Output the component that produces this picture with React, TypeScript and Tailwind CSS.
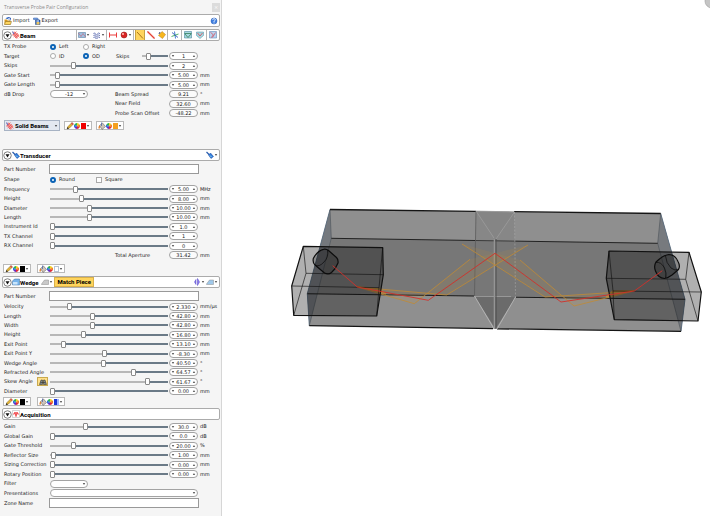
import { useState } from "react";
import type { ReactNode } from "react";

/* -------------------- Types -------------------- */

interface Param {
  label: string;
  pos: number;
  value: string;
  unit?: string;
}

/* -------------------- Data -------------------- */

const transducerParams: Param[] = [
  { label: "Frequency", pos: 20, value: "5.00", unit: "MHz" },
  { label: "Height", pos: 26, value: "8.00", unit: "mm" },
  { label: "Diameter", pos: 33, value: "10.00", unit: "mm" },
  { label: "Length", pos: 33, value: "10.00", unit: "mm" },
  { label: "Instrument Id", pos: 0, value: "1.0" },
  { label: "TX Channel", pos: 0, value: "1" },
  { label: "RX Channel", pos: 0, value: "0" }
];

const wedgeParams: Param[] = [
  { label: "Velocity", pos: 15, value: "2.330", unit: "mm/µs" },
  { label: "Length", pos: 35, value: "42.80", unit: "mm" },
  { label: "Width", pos: 35, value: "42.80", unit: "mm" },
  { label: "Height", pos: 27, value: "16.80", unit: "mm" },
  { label: "Exit Point", pos: 10, value: "13.10", unit: "mm" },
  { label: "Exit Point Y", pos: 46, value: "-8.30", unit: "mm" },
  { label: "Wedge Angle", pos: 45, value: "40.50", unit: "°" },
  { label: "Refracted Angle", pos: 72, value: "64.57", unit: "°" },
  { label: "Skew Angle", pos: 84, value: "61.67", unit: "°" },
  { label: "Diameter", pos: 0, value: "0.00", unit: "mm" }
];

const acquisitionParams: Param[] = [
  { label: "Gain", pos: 29, value: "30.0", unit: "dB" },
  { label: "Global Gain", pos: 0, value: "0.0", unit: "dB" },
  { label: "Gate Threshold", pos: 19, value: "20.00", unit: "%" },
  { label: "Reflector Size", pos: 1, value: "1.00", unit: "mm" },
  { label: "Sizing Correction", pos: 0, value: "0.00", unit: "mm" },
  { label: "Rotary Position", pos: 0, value: "0.00", unit: "mm" }
];

/* -------------------- Icons -------------------- */

const Caret = () => (
  <svg viewBox="0 0 4 4" className="h-1 w-1 shrink-0" aria-hidden="true">
    <path d="M.8 1.300h2.400L2 2.800z" fill="#222" />
  </svg>
);

function Icon({ children }: { children: ReactNode }) {
  return (
    <svg viewBox="0 0 16 16" className="h-2 w-2 shrink-0" fill="none" aria-hidden="true">
      {children}
    </svg>
  );
}

const FolderIcon = () => (
  <Icon>
    <path d="M3 3l4-3 3 5" fill="#3d6fc4" />
    <path d="M1 5h5l1 2h6v8H1z" fill="#d99a1c" />
    <path d="M3 9h12l-2 6H1z" fill="#ffd55e" stroke="#7d6320" />
    <path d="M8 1l5 1-1 5" stroke="#2c5cb8" strokeWidth="2" />
  </Icon>
);

const ExportIcon = () => (
  <Icon>
    <path d="M1 2h8l2 3H1z" fill="#79a6e8" stroke="#2856a4" />
    <path d="M5 6h9v9H5z" fill="#2e66c0" stroke="#163e85" />
    <path d="M7 10h6v5H7z" fill="#f0c65c" />
    <path d="M7 7h5v2H7z" fill="#fff" />
  </Icon>
);

const HelpIcon = () => (
  <Icon>
    <circle cx="8" cy="8" r="6" fill="#3f7fe0" stroke="#2058b8" />
    <path d="M5.500 6c0-4 6-3 5 0-1 2-2.500 1.500-2.500 4M8 11v2" stroke="#fff" strokeWidth="1.800" />
  </Icon>
);

const BeamIcon = () => (
  <Icon>
    <path d="M1 5l5-4 9 8-6 6z" fill="#f7a6a0" />
    <path d="M1 2l11 13M4 1l11 12M1 6l8 9M1 9l8-8M3 12l9-8M6 14l8-7" stroke="#e5484b" strokeWidth="1.200" />
    <path d="M1 1l3 5" stroke="#4a6ed0" strokeWidth="2" />
  </Icon>
);

const ProbeIcon = () => (
  <Icon>
    <path d="M1 2l6 6" stroke="#2c5fae" strokeWidth="2.500" />
    <path d="M5 8l4-4 6 7-5 4z" fill="#2f79dc" stroke="#1b499b" />
    <path d="M8 9l3 3" stroke="#8fe0ee" strokeWidth="2" />
  </Icon>
);

const WedgeIcon = () => (
  <Icon>
    <path d="M1 6l4-4h10v12H1z" fill="#77b4ec" stroke="#386b9f" />
    <path d="M2 8h9v5H2z" fill="#c9e5fc" />
  </Icon>
);

const PieceIcon = ({ color }: { color: string }) => (
  <Icon>
    <path d="M1 12l6-8h8v9H1z" fill={color} stroke="#8c8c8c" />
  </Icon>
);

const PulseIcon = () => (
  <Icon>
    <path d="M1 1h14v14H1z" fill="#fff" stroke="#aaa" />
    <path d="M2 8h3l1-4 2 9 2-9 1 4h3" stroke="#f0393c" strokeWidth="1.800" />
  </Icon>
);

const PencilIcon = () => (
  <Icon>
    <path d="M2 14l2-5 8-8 3 3-8 8z" fill="#e6b62f" stroke="#7a6230" />
    <path d="M11 2l3 3" stroke="#d64a56" strokeWidth="3" />
    <path d="M2 14l4-1-3-3z" fill="#222" />
  </Icon>
);

const BucketIcon = () => (
  <Icon>
    <path d="M3 7l6-5 6 7-7 6z" fill="#cfc4b8" stroke="#4e4e57" />
    <path d="M3 7c-2 2-3 4-1 7 2-1 2-4 2-6z" fill="#e17e28" />
    <path d="M7 8V1" stroke="#4a62a8" strokeWidth="1.500" />
  </Icon>
);

const WheelIcon = () => (
  <svg viewBox="0 0 16 16" className="h-[6px] w-[6px] shrink-0" aria-hidden="true">
    <path d="M8 8V0a8 8 0 0 1 7 4z" fill="#f2cf22" />
    <path d="M8 8l7-4a8 8 0 0 1 0 8z" fill="#f07b22" />
    <path d="M8 8l7 4a8 8 0 0 1-7 4z" fill="#dd2837" />
    <path d="M8 8v8a8 8 0 0 1-7-4z" fill="#6a2bc0" />
    <path d="M8 8l-7 4a8 8 0 0 1 0-8z" fill="#246fe0" />
    <path d="M8 8L1 4a8 8 0 0 1 7-4z" fill="#29b24c" />
  </svg>
);

/* -------------------- Controls -------------------- */

function Slider({ name, pos }: { name: string; pos: number }) {
  const [current, setCurrent] = useState(pos);

  return (
    <input
      type="range"
      aria-label={name}
      value={current}
      onChange={e => setCurrent(Number(e.target.value))}
      style={{
        backgroundImage: `linear-gradient(to right, #b8b8b8 ${current}%, #6b7a87 ${current}%)`
      }}
      className="h-[2px] w-full min-w-0 appearance-none [&::-webkit-slider-thumb]:h-[7px] [&::-webkit-slider-thumb]:w-[5px] [&::-webkit-slider-thumb]:appearance-none [&::-webkit-slider-thumb]:rounded-[1px] [&::-webkit-slider-thumb]:border [&::-webkit-slider-thumb]:border-[#8a8a8a] [&::-webkit-slider-thumb]:bg-white"
    />
  );
}

function Spin({ id, value }: { id: string; value: string }) {
  return (
    <div className="flex h-[8px] w-[29px] shrink-0 items-center rounded-full border border-[#a3a3a3] bg-white px-px">
      <button aria-label="Decrease" className="flex"><Caret /></button>
      <input id={id} defaultValue={value} className="h-[6px] w-full min-w-0 bg-transparent text-center leading-[6px]" />
      <button aria-label="Increase" className="flex rotate-180"><Caret /></button>
    </div>
  );
}

function Row({ label, htmlFor, children }: { label: string; htmlFor?: string; children: ReactNode }) {
  return (
    <div className="grid grid-cols-[46px_1fr] items-center pl-1 whitespace-nowrap">
      <label htmlFor={htmlFor}>{label}</label>
      <div className="flex min-w-0 items-center">{children}</div>
    </div>
  );
}

function ParamRow({ group, param }: { group: string; param: Param }) {
  const id = `${group}-${param.label}`;

  return (
    <Row label={param.label} htmlFor={id}>
      <div className="relative mr-px flex w-[118px] items-center">
        {param.label === "Skew Angle" && (
          <button
            aria-label="Flip skew"
            className="absolute right-full mr-[2px] flex h-[9px] w-[11px] items-center justify-center border border-[#c9a94e] bg-[#ffe08a]"
          >
            <Icon>
              <path d="M1 13l3-9h3v9zM15 13l-3-9H9v9z" fill="#7d8790" stroke="#222" />
              <path d="M3 9h10" stroke="#222" />
            </Icon>
          </button>
        )}
        <Slider name={`${param.label} slider`} pos={param.pos} />
      </div>
      <Spin id={id} value={param.value} />
      <span className="ml-[2px]">{param.unit}</span>
    </Row>
  );
}

function ReadOut({ label, value, unit }: { label: string; value: string; unit: string }) {
  return (
    <div className="ml-auto flex w-[105px] shrink-0 items-center">
      <label htmlFor={label} className="w-[54px]">{label}</label>
      <input
        id={label}
        readOnly
        value={value}
        className="h-[8px] w-[29px] rounded-full border border-[#a3a3a3] bg-[#fbfbfb] text-center leading-[6px]"
      />
      <span className="ml-[2px]">{unit}</span>
    </div>
  );
}

function Radio({ name, label, checked }: { name: string; label: string; checked?: boolean }) {
  return (
    <label className="flex w-[33px] items-center gap-[3px]">
      <input
        type="radio"
        name={name}
        defaultChecked={checked}
        className="h-[6px] w-[6px] appearance-none rounded-full border border-[#aaa] bg-white checked:border-2 checked:border-[#0b63b6]"
      />
      {label}
    </label>
  );
}

function Select({ id, option, wide }: { id: string; option: string; wide?: boolean }) {
  return (
    <div className={wide ? "relative w-[148px]" : "relative w-[38px]"}>
      <select
        id={id}
        className="block h-[8px] w-full appearance-none rounded-full border border-[#a3a3a3] bg-white text-center leading-[6px]"
      >
        <option>{option}</option>
      </select>
      <span className="pointer-events-none absolute top-[2px] right-[2px]"><Caret /></span>
    </div>
  );
}

function TextRow({ label, id }: { label: string; id: string }) {
  return (
    <Row label={label} htmlFor={id}>
      <input id={id} className="-ml-px h-[10px] w-[150px] border border-[#999] bg-white px-px" />
    </Row>
  );
}

function ColorButton({ kind, swatch }: { kind: "line" | "fill"; swatch: string }) {
  return (
    <button
      aria-label={`${kind} color`}
      className="flex h-[9px] w-[28px] items-center justify-between border border-[#b9b9b9] bg-white px-px"
    >
      {kind === "line" ? <PencilIcon /> : <BucketIcon />}
      <WheelIcon />
      <span className={`ml-px h-[6px] w-[6px] ${swatch}`} />
      <Caret />
    </button>
  );
}

function Header({ icon, title, children }: { icon: ReactNode; title: string; children?: ReactNode }) {
  return (
    <div className="ml-[2px] flex h-[12px] items-center rounded-[2px] border border-[#ababab] bg-white">
      <button aria-label={`Collapse ${title}`} className="flex">
        <svg viewBox="0 0 18 18" className="h-[9px] w-[9px]" aria-hidden="true">
          <circle cx="9" cy="9" r="7.500" fill="#fff" stroke="#555" strokeWidth="1.500" />
          <path d="M5 6.500h8L9 13z" fill="#111" />
        </svg>
      </button>
      {icon}
      <h2 className="font-['Roboto'] text-[6px] font-bold text-black">{title}</h2>
      {children}
    </div>
  );
}

function ToolGroup({ width, children }: { width: string; children: ReactNode }) {
  return (
    <div className={`flex h-full items-center justify-around border-l border-[#b5b5b5] ${width}`}>
      {children}
    </div>
  );
}

function Tool({ name, active, drop, children }: { name: string; active?: boolean; drop?: boolean; children: ReactNode }) {
  return (
    <button
      aria-label={name}
      className={active ? "flex h-full items-center border-x border-[#c9a243] bg-[#ffd45c]" : "flex items-center"}
    >
      <Icon>{children}</Icon>
      {drop && <Caret />}
    </button>
  );
}

/* -------------------- 3D view -------------------- */

function Scene() {
  return (
    <svg viewBox="222 0 488 516" className="h-screen w-full" role="img" aria-label="Probe pair view" fill="none" strokeLinejoin="round">
      <circle cx="712" cy="1" r="7" fill="#c5c5c5" stroke="#a5a5a5" strokeWidth=".7" />

      {/* plate */}
      <path d="M330 209.500L660.700 213.500L685 299.300L681 331.300L309.300 325.700L307.300 293.700z" fill="#8f8f8f" />
      <path d="M331.300 238.300L657.700 243.300L685 299.300L307.300 293.700z" fill="#777" />
      <path d="M330 209.500L331.300 238.300L309.300 325.700L307.300 293.700z" fill="#74787d" />
      <path d="M660.700 213.500L657.700 243.300L681 331.300L685 299.300z" fill="#777a7e" />
      <path d="M330 209.500L307.300 293.700L309.300 325.700M660.700 213.500L685 299.300L681 331.300" stroke="#5a6c7e" strokeWidth=".9" />
      <path d="M330 209.500L331.300 238.300L309.300 325.700M660.700 213.500L657.700 243.300L681 331.300" stroke="#4c5359" strokeWidth=".6" />
      <path d="M330 209.500L476 211.300M514 211.700L660.700 213.500M309.300 325.700L493 328.700M497 328.800L681 331.300" stroke="#151515" strokeWidth="1.300" />
      <path d="M307.300 293.700L474 296M516 297.300L685 299.300" stroke="#1c1c1c" strokeWidth="1.100" />
      <path d="M331.300 238.300L657.700 243.300" stroke="#222" />

      {/* weld */}
      <path d="M476 211L514.500 211.700L515.500 297L495 329L474.500 296z" fill="#777" fillOpacity=".3" />
      <path d="M476 211L514.500 211.700L495.500 240z" fill="#858585" />
      <path d="M474.500 296L515.500 297L495.500 329z" fill="#6b6b6b" />
      <path d="M476 211L474.500 296" stroke="#5c5c5c" strokeWidth=".8" />
      <path d="M514.500 212L515.500 297" stroke="#a8a8a8" strokeDasharray="2 1.500" strokeWidth=".6" />
      <path d="M476 211L494 238M514.500 212L496 239M476 211L514.500 212" stroke="#a0a0a0" strokeWidth=".7" />
      <path d="M474.500 296L493.500 328M515.500 297L497 329" stroke="#bdbdbd" strokeWidth=".8" />
      <path d="M474.500 296.500H511" stroke="#b0b0b0" strokeWidth=".6" />
      <path d="M494.500 239V329" stroke="#959595" strokeWidth="1.600" />
      <path d="M496 239V329" stroke="#4b4b4b" strokeWidth=".9" />

      {/* beams */}
      <g stroke="#c08a35" strokeWidth=".8">
        <path d="M357 287L414.300 303.700L470 259.300L528 245L446.700 295z" fill="#e59b28" fillOpacity=".1" stroke="none" />
        <path d="M634.300 291L574 306L520 260L462 244L545 297z" fill="#e59b28" fillOpacity=".1" stroke="none" />
        <path d="M357 287L414.300 303.700L470 259.300M357 287L446.700 295L528 245" />
        <path d="M634.300 291L574 306L520 260M634.300 291L545 297L462 244" />
        <path d="M357 286.500L380 289L386 294zM634 290.500L612 291L606 297z" fill="#e59b28" fillOpacity=".4" />
      </g>

      {/* wedges */}
      <g stroke="#111" strokeWidth="1.200">
        <path d="M303.300 246.300L382.700 247.700L383.300 274.700L376.700 316L293.700 315.300L291.700 286z" fill="#000" fillOpacity=".31" />
        <path d="M303.300 246.300L306 273.300L383.300 274.700M306 273.300L293.700 315.300M291.700 286L379 287.700L376.700 316M379 287.700L382.700 247.700" strokeWidth=".8" strokeOpacity=".8" />
        <path d="M609 251L689 252.300L701.300 292L698 321L614.300 319.700L606.300 278.300z" fill="#000" fillOpacity=".31" />
        <path d="M606.300 278.300L685.700 279.300L689 252.300M685.700 279.300L698 321M609 251L613 291L701.300 292M613 291L614.300 319.700" strokeWidth=".8" strokeOpacity=".8" />
      </g>

      {/* elements */}
      <g stroke="#0c0c0c" strokeWidth="1.200">
        <path d="M323.500 249.300Q317 251 313.300 258.500Q312.500 263 315 265L324.500 273Q328.500 275 331.500 272.500Q336 268.500 338 263Q338.500 259.500 336.500 257.500L328.500 250.500Q326 248.500 323.500 249.300z" fill="#000" fillOpacity=".2" />
        <path d="M327.500 250Q329 257 324 262Q319 267.500 315 265" strokeWidth=".7" />
        <path d="M668.800 254.500Q663.500 255 656 262Q653.500 266 655.500 271Q658 278 664.500 278.500Q668 278 672 275L678.500 269.500Q680.500 266 678 261.500Q675 254.500 668.800 254.500z" fill="#000" fillOpacity=".2" />
        <path d="M656 262.500Q661 261.500 664.500 268Q667 273 665.500 278M665.500 256Q666 263 671 268Q675 271.500 679 269" strokeWidth=".7" />
      </g>
      <path d="M332.700 265.700L357.300 287L428.300 300.300L495 253.300L561 302L634.300 291L662.300 270.700" stroke="#d1302a" strokeWidth=".9" />
    </svg>
  );
}

/* -------------------- Page -------------------- */

export default function App() {
  return (
    <div className="flex min-h-screen bg-white font-['DejaVu_Sans','Noto_Sans',sans-serif] text-[5px] leading-[7px] text-[#222]">
      <aside className="flex w-[222px] shrink-0 flex-col border-r border-[#d6d6d6] bg-[#f5f5f5] pr-px">
        <div className="flex h-[14px] items-center justify-between pl-1 text-[#8a8a8a]">
          <h1 className="font-['Open_Sans']">Transverse Probe Pair Configuration</h1>
          <button aria-label="Close" className="h-[9px] w-[8px] bg-[#dcdcdc] text-white">×</button>
        </div>

        <div className="ml-[2px] flex h-[13px] items-center gap-[3px] rounded-[2px] border border-[#ababab] bg-white px-px">
          <button className="flex items-center gap-px"><FolderIcon />Import</button>
          <button className="flex items-center gap-px"><ExportIcon />Export</button>
          <button aria-label="Help" className="ml-auto"><HelpIcon /></button>
        </div>

        {/* Beam */}
        <section className="mt-[2px] flex flex-col">
          <Header icon={<BeamIcon />} title="Beam">
            <div className="ml-auto flex h-full">
              <ToolGroup width="w-[30px]">
                <Tool name="Scan" drop>
                  <path d="M1 3h14v10H1z" fill="#9fc3e3" stroke="#456f94" />
                  <path d="M1 4l5 7 4-6 5 7" stroke="#cf4654" />
                </Tool>
                <Tool name="Pattern" drop>
                  <path d="M1 6q2-5 4 0t4 0 5 0M1 10q2-5 4 0t4 0 5 0M1 14q2-5 4 0t4 0 5 0" stroke="#4a5ba8" strokeWidth="1.500" />
                </Tool>
              </ToolGroup>
              <ToolGroup width="w-[27px]">
                <Tool name="Distance">
                  <path d="M1 3v10M15 3v10M1 8h14" stroke="#ea3b3b" strokeWidth="2" />
                </Tool>
                <Tool name="Focus" drop>
                  <circle cx="8" cy="8" r="6" fill="#d92424" stroke="#8d1111" />
                  <circle cx="6" cy="6" r="2" fill="#ffc2b8" />
                </Tool>
              </ToolGroup>
              <ToolGroup width="w-[34px]">
                <Tool name="Ray" active>
                  <path d="M2 2l12 13" stroke="#a8731b" strokeWidth="2" />
                </Tool>
                <Tool name="Beam line">
                  <path d="M1 1l14 14" stroke="#f29a8e" strokeWidth="4" />
                  <path d="M1 1l14 14" stroke="#e2332c" strokeWidth="1.800" />
                </Tool>
                <Tool name="Surface">
                  <path d="M1 9l7-8 7 6-6 8z" fill="#f8b71c" stroke="#b57d16" />
                  <path d="M4 2l-2 4" stroke="#3f4a78" strokeWidth="2" />
                </Tool>
              </ToolGroup>
              <ToolGroup width="w-[14px]">
                <Tool name="Axes">
                  <path d="M7 1l2 14" stroke="#2f6fce" strokeWidth="1.800" />
                  <path d="M1 11l14-5" stroke="#3cab5b" strokeWidth="1.800" />
                  <path d="M2 3l12 10" stroke="#3a5ab9" strokeWidth="1.800" />
                </Tool>
              </ToolGroup>
              <ToolGroup width="w-[25px]">
                <Tool name="Top view">
                  <path d="M1 1h14v13H1z" fill="#a8d7df" stroke="#31758f" />
                  <path d="M1 5h14M2 6l6 7 6-7" stroke="#2c7a50" strokeWidth="1.500" />
                </Tool>
                <Tool name="Side view">
                  <path d="M1 2h14v7l-7 6-7-6z" fill="#a8d7df" stroke="#4b8ba3" />
                  <path d="M3 4l5 6 5-6" stroke="#d25363" strokeWidth="1.800" />
                </Tool>
              </ToolGroup>
              <ToolGroup width="w-[13px]">
                <Tool name="End view">
                  <path d="M1 1h14v13H1z" fill="#b8d3ef" stroke="#4d78ac" />
                  <path d="M3 3q10 5 1 10M13 3l-6 10" stroke="#d25363" strokeWidth="1.500" />
                </Tool>
              </ToolGroup>
            </div>
          </Header>

          <div className="mt-px grid h-[76px] auto-rows-fr items-center">
            <Row label="TX Probe">
              <Radio name="tx" label="Left" checked />
              <Radio name="tx" label="Right" />
            </Row>
            <Row label="Target">
              <Radio name="target" label="ID" />
              <Radio name="target" label="OD" checked />
              <label htmlFor="target-skips" className="w-[26px]">Skips</label>
              <div className="mr-px flex w-[26px]"><Slider name="Target skips slider" pos={20} /></div>
              <Spin id="target-skips" value="1" />
            </Row>
            <ParamRow group="beam" param={{ label: "Skips", pos: 19, value: "2" }} />
            <ParamRow group="beam" param={{ label: "Gate Start", pos: 4, value: "5.00", unit: "mm" }} />
            <ParamRow group="beam" param={{ label: "Gate Length", pos: 4, value: "5.00", unit: "mm" }} />
            <Row label="dB Drop" htmlFor="db-drop">
              <Select id="db-drop" option="-12" />
              <ReadOut label="Beam Spread" value="9.21" unit="°" />
            </Row>
            <div className="flex"><ReadOut label="Near Field" value="32.60" unit="mm" /></div>
            <div className="flex"><ReadOut label="Probe Scan Offset" value="-48.22" unit="mm" /></div>
          </div>

          <div className="mt-[2px] flex items-center pl-1">
            <button className="mr-1 flex h-[11px] w-[56px] items-center gap-px border border-[#a7b3c4] bg-[#e3e8f0] px-px font-['Roboto'] font-bold text-black">
              <BeamIcon />
              <span className="flex-1 text-left text-[6px]">Solid Beams</span>
              <Caret />
            </button>
            <ColorButton kind="line" swatch="bg-[#f00000]" />
            <span className="w-1" />
            <ColorButton kind="fill" swatch="bg-[#f5a01e]" />
          </div>
        </section>

        {/* Transducer */}
        <section className="mt-[18px] flex flex-col">
          <Header icon={<ProbeIcon />} title="Transducer">
            <button aria-label="Probe library" className="ml-auto flex items-center pr-px"><ProbeIcon /><Caret /></button>
          </Header>
          <div className="mt-[3px] mb-px"><TextRow label="Part Number" id="probe-part" /></div>
          <div className="grid h-[85px] auto-rows-fr items-center">
            <Row label="Shape">
              <Radio name="shape" label="Round" checked />
              <label className="ml-[13px] flex items-center gap-[3px]">
                <input type="checkbox" className="h-[6px] w-[6px] appearance-none border border-[#aaa] bg-white checked:bg-[#0b63b6]" />
                Square
              </label>
            </Row>
            {transducerParams.map(param => (
              <ParamRow key={param.label} group="probe" param={param} />
            ))}
            <div className="flex"><ReadOut label="Total Aperture" value="31.42" unit="mm" /></div>
          </div>
          <div className="mt-1 flex gap-[6px] pl-[3px]">
            <ColorButton kind="line" swatch="bg-black" />
            <ColorButton kind="fill" swatch="border border-[#b8c4d4] bg-white" />
          </div>
        </section>

        {/* Wedge */}
        <section className="mt-[3px] flex flex-col">
          <Header icon={<WedgeIcon />} title="Wedge">
            <button aria-label="Wedge shape" className="ml-[3px] flex items-center"><PieceIcon color="#c9c9c9" /><Caret /></button>
            <button className="ml-px h-[10px] border border-[#d9b04a] bg-[#ffd45c] px-[2px] font-['Roboto'] text-[6px] leading-[8px] font-bold text-black">Match Piece</button>
            <button aria-label="Mirror" className="ml-auto flex items-center">
              <Icon>
                <path d="M6 3v10l-3-5z" fill="#8e7df0" stroke="#5144c6" />
                <path d="M9 1v14l4-7z" fill="#8e7df0" stroke="#5144c6" />
              </Icon>
              <Caret />
            </button>
            <button aria-label="Wedge library" className="ml-px flex items-center pr-px"><PieceIcon color="#9fc8ea" /><Caret /></button>
          </Header>
          <div className="mt-[3px] mb-px"><TextRow label="Part Number" id="wedge-part" /></div>
          <div className="grid h-[94px] auto-rows-fr items-center">
            {wedgeParams.map(param => (
              <ParamRow key={param.label} group="wedge" param={param} />
            ))}
          </div>
          <div className="mt-px flex gap-[6px] pl-[3px]">
            <ColorButton kind="line" swatch="bg-black" />
            <ColorButton kind="fill" swatch="border-r-2 border-[#9db4ff] bg-[#1c35d8]" />
          </div>
        </section>

        {/* Acquisition */}
        <section className="mt-[2px] flex flex-col">
          <Header icon={<PulseIcon />} title="Acquisition" />
          <div className="mt-[2px] grid h-[76px] auto-rows-fr items-center">
            {acquisitionParams.map(param => (
              <ParamRow key={param.label} group="acq" param={param} />
            ))}
            <Row label="Filter" htmlFor="filter"><Select id="filter" option="" /></Row>
            <Row label="Presentations" htmlFor="presentations"><Select id="presentations" option="" wide /></Row>
          </div>
          <TextRow label="Zone Name" id="zone" />
        </section>
      </aside>

      <main className="min-w-0 flex-1">
        <Scene />
      </main>
    </div>
  );
}
